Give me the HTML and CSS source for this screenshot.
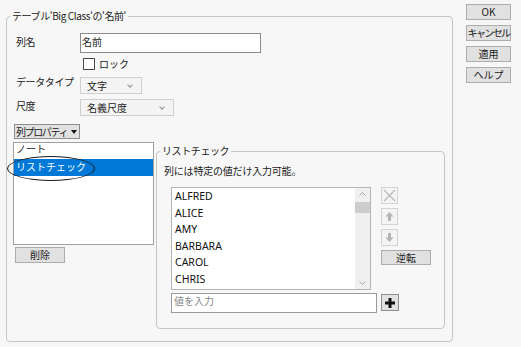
FILE: index.html
```html
<!DOCTYPE html>
<html lang="ja">
<head>
    <meta charset="UTF-8">
    <title>列情報</title>
    <link rel="stylesheet" href="styles.css">
</head>
<body>
    <div class="dialog">
        <fieldset class="group main-group">
            <legend>テーブル'Big Class'の'名前'</legend>

            <div class="field row-name">
                <span class="label">列名</span>
                <input class="text-box" type="text" value="名前">
            </div>

            <div class="check-row">
                <span class="checkbox"></span>
                <span>ロック</span>
            </div>

            <div class="field row-type">
                <span class="label">データタイプ</span>
                <div class="select select-type">文字<span class="chev"></span></div>
            </div>

            <div class="field row-scale">
                <span class="label">尺度</span>
                <div class="select select-scale">名義尺度<span class="chev"></span></div>
            </div>

            <button class="btn menu-btn">列プロパティ<span class="caret"></span></button>

            <div class="props">
                <div class="prop-col">
                    <ul class="prop-list">
                        <li class="first">ノート</li>
                        <li class="selected">リストチェック</li>
                    </ul>
                    <span class="ring"></span>
                    <button class="btn delete-btn">削除</button>
                </div>

                <fieldset class="group list-group">
                    <legend>リストチェック</legend>
                    <p class="desc">列には特定の値だけ入力可能。</p>

                    <div class="values">
                        <div class="value-list">
                            <ul class="items">
                                <li>ALFRED</li>
                                <li>ALICE</li>
                                <li>AMY</li>
                                <li>BARBARA</li>
                                <li>CAROL</li>
                                <li>CHRIS</li>
                            </ul>
                            <div class="scrollbar">
                                <svg class="sb-arrow" width="15" height="12" viewBox="0 0 15 12"><path d="M4.5 7.5 L7.5 4.5 L10.5 7.5" fill="none" stroke="#a6a6a6" stroke-width="1"/></svg>
                                <div class="thumb"></div>
                                <div class="sb-track"></div>
                                <svg class="sb-arrow" width="15" height="12" viewBox="0 0 15 12"><path d="M4.5 4.5 L7.5 7.5 L10.5 4.5" fill="none" stroke="#a6a6a6" stroke-width="1"/></svg>
                            </div>
                        </div>

                        <div class="tools">
                            <div class="icon-btn">
                                <svg width="15" height="15" viewBox="0 0 15 15"><path d="M2 2 L13 13 M13 2 L2 13" stroke="#b9b9b9" stroke-width="1.2"/></svg>
                            </div>
                            <div class="icon-btn">
                                <svg width="15" height="15" viewBox="0 0 15 15"><path d="M7.5 3 L11.5 7.5 L9 7.5 L9 12 L6 12 L6 7.5 L3.5 7.5 Z" fill="#b5b5b5"/></svg>
                            </div>
                            <div class="icon-btn">
                                <svg width="15" height="15" viewBox="0 0 15 15"><path d="M7.5 12 L11.5 7.5 L9 7.5 L9 3 L6 3 L6 7.5 L3.5 7.5 Z" fill="#b5b5b5"/></svg>
                            </div>
                            <button class="btn reverse-btn">逆転</button>
                        </div>
                    </div>

                    <div class="add-row">
                        <input class="text-box value-input" type="text" placeholder="値を入力">
                        <button class="btn plus-btn">
                            <svg width="12" height="12" viewBox="0 0 12 12"><path d="M4.5 1 H7.5 V4.5 H11 V7.5 H7.5 V11 H4.5 V7.5 H1 V4.5 H4.5 Z" fill="#111"/></svg>
                        </button>
                    </div>
                </fieldset>
            </div>
        </fieldset>

        <div class="side-buttons">
            <button class="btn">OK</button>
            <button class="btn tight">キャンセル</button>
            <button class="btn">適用</button>
            <button class="btn">ヘルプ</button>
        </div>
    </div>
</body>
</html>
```

FILE: styles.css
```css
body {
    margin: 0;
    background-color: #f7f7f7;
    color: #1a1a1a;
    font-family: "Noto Sans CJK JP", "Noto Sans", sans-serif;
    font-size: 10px;
}
.dialog {
    display: flex;
    align-items: flex-start;
    padding: 4px 0 0 6px;
}
.group {
    margin: 0;
    border: 1px solid #c6c6c6;
    border-radius: 4px;
    min-width: 0;
}
.group legend {
    padding: 0 2px;
    line-height: 14px;
    font-size: 10px;
    letter-spacing: -0.4px;
}
.main-group {
    width: 447px;
    box-sizing: border-box;
    margin-top: 5px;
    padding: 0 7px 12px 6px;
}
.main-group > legend {
    margin-left: -3px;
}

/* form rows */
.field {
    display: flex;
    align-items: center;
}
.label {
    width: 67px;
    padding-left: 3px;
    box-sizing: border-box;
    flex-shrink: 0;
    letter-spacing: -0.4px;
}
.row-name {
    margin-top: 10px;
    height: 19px;
}
.row-name .label {
    margin-top: -3px;
}
.text-box {
    box-sizing: border-box;
    margin: 0;
    border: 1px solid #8a8a8a;
    background: #fff;
    font-family: inherit;
    font-size: 10px;
    color: #1a1a1a;
    outline: none;
}
.row-name .text-box {
    width: 181px;
    height: 20px;
    padding: 0 1px 3px;
}
.check-row {
    display: flex;
    align-items: center;
    gap: 4px;
    margin-top: 5px;
    padding-left: 70px;
    height: 13px;
}
.checkbox {
    width: 10px;
    height: 10px;
    border: 1px solid #4a4a4a;
    background: #fff;
}
.row-type {
    margin-top: 7px;
    height: 17px;
}
.row-type .label {
    margin-top: -8px;
}
.row-scale {
    margin-top: 5px;
    height: 17px;
}
.row-scale .label {
    margin-top: -4px;
}
.select {
    position: relative;
    box-sizing: border-box;
    height: 17px;
    padding-left: 6px;
    line-height: 16px;
    border: 1px solid #cfcfcf;
    background: #f4f4f4;
}
.select-type {
    width: 62px;
}
.select-scale {
    width: 94px;
}
.chev {
    position: absolute;
    right: 9px;
    top: 5px;
    width: 3px;
    height: 3px;
    border-right: 1px solid #8c8c8c;
    border-bottom: 1px solid #8c8c8c;
    transform: rotate(45deg);
}

/* buttons */
.btn {
    box-sizing: border-box;
    margin: 0;
    padding: 0;
    height: 16px;
    border: 1px solid #adadad;
    background: #e1e1e1;
    font-family: inherit;
    font-size: 10px;
    line-height: 14px;
    color: #1a1a1a;
    text-align: center;
    white-space: nowrap;
}
.tight {
    letter-spacing: -1.6px;
}
.menu-btn {
    display: flex;
    align-items: center;
    gap: 2px;
    margin-top: 8px;
    margin-left: 1px;
    height: 15px;
    padding: 0 2px 0 1px;
    border-color: #8e8e8e;
    letter-spacing: -1.4px;
}
.caret {
    width: 0;
    height: 0;
    margin-left: 2px;
    border-left: 3.5px solid transparent;
    border-right: 3.5px solid transparent;
    border-top: 4px solid #111;
}

/* properties area */
.props {
    display: flex;
    align-items: flex-start;
    margin-top: 3px;
}
.prop-col {
    position: relative;
    width: 141px;
    flex-shrink: 0;
}
.prop-list {
    list-style: none;
    margin: 0;
    padding: 0;
    height: 103px;
    box-sizing: border-box;
    border: 1px solid #a0a0a0;
    background: #fff;
    overflow: hidden;
}
.prop-list li {
    height: 17px;
    line-height: 16px;
    padding-left: 2px;
}
.prop-list li.first {
    height: 16px;
    line-height: 12px;
}
.prop-list li.selected {
    background: #0078d7;
    color: #fff;
}
.ring {
    position: absolute;
    left: -6px;
    top: 14px;
    width: 88px;
    height: 25px;
    box-sizing: border-box;
    border: 1.6px solid #1c1c1c;
    border-radius: 50%;
}
.delete-btn {
    display: block;
    margin: 2px 0 0 2px;
    width: 50px;
    height: 16px;
}

.list-group {
    width: 289px;
    box-sizing: border-box;
    margin-left: 2px;
    margin-top: 2px;
    padding: 0 7px 15px 7px;
}
.list-group > legend {
    margin-left: -4px;
}
.desc {
    margin: 6px 0 0;
    line-height: 14px;
    letter-spacing: -0.2px;
}
.values {
    display: flex;
    align-items: flex-start;
    margin-top: 9px;
    margin-left: 7px;
}
.value-list {
    display: flex;
    width: 200px;
    height: 103px;
    box-sizing: border-box;
    border: 1px solid #b4b4b4;
    background: #fff;
}
.items {
    flex: 1;
    list-style: none;
    margin: 0;
    padding: 0;
    font-family: "Noto Sans", sans-serif;
    font-size: 10.5px;
    color: #111;
}
.items li {
    height: 16.6px;
    line-height: 17px;
    padding-left: 3px;
}
.scrollbar {
    display: flex;
    flex-direction: column;
    width: 15px;
    background: #f0f0f0;
}
.sb-arrow {
    display: block;
    flex-shrink: 0;
}
.thumb {
    margin-top: 2px;
    height: 11px;
    background: #cdcdcd;
}
.sb-track {
    flex: 1;
}
.tools {
    display: flex;
    flex-direction: column;
    gap: 4px;
    margin-left: 10px;
}
.icon-btn {
    width: 17px;
    height: 17px;
    box-sizing: border-box;
    border: 1px solid #d3d3d3;
    background: #f4f4f4;
}
.icon-btn svg {
    display: block;
}
.reverse-btn {
    width: 50px;
    height: 15px;
}
.add-row {
    display: flex;
    align-items: flex-start;
    margin-top: 3px;
    margin-left: 7px;
}
.value-input {
    width: 206px;
    height: 20px;
    padding: 0 2px 6px;
    border-color: #9a9a9a;
}
.value-input::placeholder {
    color: #8a8a8a;
}
.plus-btn {
    margin-left: 4px;
    margin-top: 1px;
    width: 18px;
    height: 17px;
    display: flex;
    align-items: center;
    justify-content: center;
    border-color: #8e8e8e;
}

.side-buttons {
    display: flex;
    flex-direction: column;
    gap: 5px;
    margin-left: 13px;
    width: 45px;
}
.side-buttons .btn {
    width: 45px;
}
```
